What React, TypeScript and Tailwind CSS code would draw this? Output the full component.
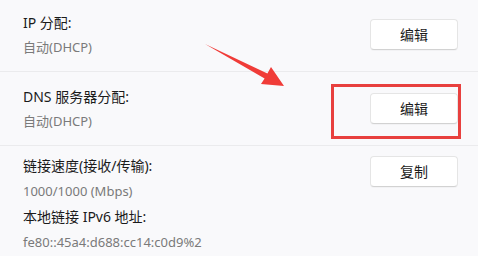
const FONT = "font-['Segoe_UI','Noto_Sans','Noto_Sans_CJK_SC',sans-serif]";

function Btn({ label }: { label: string }) {
  return (
    <button className="h-[31px] w-[88px] shrink-0 rounded-[4px] border border-[#e5e5e5] border-b-[#d2d2d2] bg-white text-[14px] text-[#1b1b1b] shadow-[0_1px_1px_rgba(0,0,0,0.03)]">
      {label}
    </button>
  );
}

export default function App() {
  return (
    <div className={`relative h-[256px] w-[478px] overflow-hidden bg-[#f9f9fb] ${FONT}`}>
      {/* IP 分配 */}
      <div className="flex h-[72px] justify-between border-b border-[#ebebed] pl-[23px] pr-[20px]">
        <div className="pt-[10px] leading-[25px]">
          <div className="text-[14px] text-[#1b1b1b]">IP 分配:</div>
          <div className="text-[13px] text-[#7a7a7a]">自动(DHCP)</div>
        </div>
        <div className="pt-[19px]">
          <Btn label="编辑" />
        </div>
      </div>

      {/* DNS 服务器分配 */}
      <div className="flex h-[74px] justify-between border-b border-[#ebebed] pl-[23px] pr-[20px]">
        <div className="pt-[12px] leading-[25px]">
          <div className="text-[14px] text-[#1b1b1b]">DNS 服务器分配:</div>
          <div className="text-[13px] text-[#7a7a7a]">自动(DHCP)</div>
        </div>
        <div className="pt-[21px]">
          <Btn label="编辑" />
        </div>
      </div>

      {/* 链接速度 / IPv6 */}
      <div className="flex justify-between pl-[23px] pr-[20px]">
        <div className="pt-[7px] leading-[25.5px]">
          <div className="text-[14px] text-[#1b1b1b]">链接速度(接收/传输):</div>
          <div className="text-[13px] text-[#7a7a7a]">1000/1000 (Mbps)</div>
          <div className="text-[14px] text-[#1b1b1b]">本地链接 IPv6 地址:</div>
          <div className="text-[13px] text-[#7a7a7a]">fe80::45a4:d688:cc14:c0d9%2</div>
        </div>
        <div className="pt-[10px]">
          <Btn label="复制" />
        </div>
      </div>

      {/* 标注 */}
      <div className="absolute left-[331px] top-[84px] h-[55px] w-[130px] border-[3px] border-[#e8403e]" />
      <svg className="absolute left-0 top-0" width="478" height="256" viewBox="0 0 478 256">
        <polygon
          points="205,44 267.4,73.4 271,67 284,86 261,84 264.6,78.6"
          fill="#f03c38"
        />
      </svg>
    </div>
  );
}
